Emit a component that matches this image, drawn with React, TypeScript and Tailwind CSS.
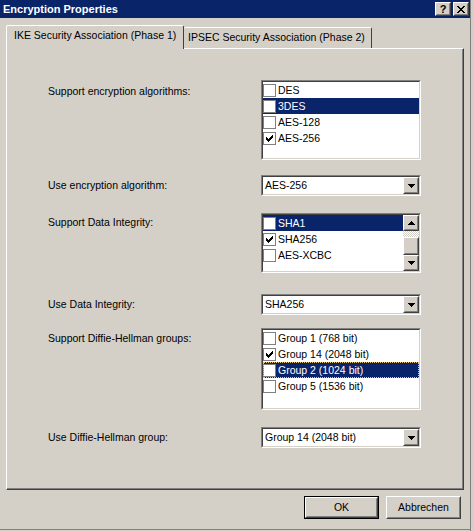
import type { ReactNode } from "react";

type Item = { label: string; checked?: boolean; selected?: boolean; focused?: boolean };

function Raised({ className, inner, children }: { className: string; inner?: string; children?: ReactNode }) {
  return (
    <div className={`bg-[#d4d0c8] border border-t-white border-l-white border-r-[#404040] border-b-[#404040] ${className}`}>
      <div className={`h-full border border-t-[#d4d0c8] border-l-[#d4d0c8] border-r-[#808080] border-b-[#808080] ${inner ?? ""}`}>
        {children}
      </div>
    </div>
  );
}

function Sunken({ className, inner, children }: { className: string; inner?: string; children?: ReactNode }) {
  return (
    <div className={`border border-t-[#808080] border-l-[#808080] border-r-white border-b-white ${className}`}>
      <div className={`h-full border border-t-[#404040] border-l-[#404040] border-r-[#d4d0c8] border-b-[#d4d0c8] ${inner ?? ""}`}>
        {children}
      </div>
    </div>
  );
}

function Arrow({ up }: { up?: boolean }) {
  return (
    <svg width="7" height="4" viewBox="0 0 7 4" shapeRendering="crispEdges">
      <path
        d={up ? "M3 0h1v1H3zM2 1h3v1H2zM1 2h5v1H1zM0 3h7v1H0z" : "M0 0h7v1H0zM1 1h5v1H1zM2 2h3v1H2zM3 3h1v1H3z"}
        fill="#000"
      />
    </svg>
  );
}

function CheckBox({ checked }: { checked?: boolean }) {
  return (
    <div className="w-[13px] h-[13px] shrink-0 bg-white border border-[#808080] flex items-center justify-center">
      {checked && (
        <svg width="7" height="7" viewBox="0 0 7 7" shapeRendering="crispEdges">
          <path d="M6 0h1v3H6zM5 1h1v3H5zM4 2h1v3H4zM3 3h1v3H3zM2 4h1v3H2zM1 3h1v3H1zM0 2h1v3H0z" fill="#000" />
        </svg>
      )}
    </div>
  );
}

function ScrollBar() {
  return (
    <div className="w-[16px] h-full flex flex-col">
      <Raised className="h-[16px]" inner="flex items-center justify-center">
        <Arrow up />
      </Raised>
      <div className="h-[6px] bg-[conic-gradient(#fff_25%,#d4d0c8_0_50%,#fff_0_75%,#d4d0c8_0)] bg-size-[2px_2px]" />
      <Raised className="h-[18px]" />
      <div className="flex-1 bg-[conic-gradient(#fff_25%,#d4d0c8_0_50%,#fff_0_75%,#d4d0c8_0)] bg-size-[2px_2px]" />
      <Raised className="h-[16px]" inner="flex items-center justify-center">
        <Arrow />
      </Raised>
    </div>
  );
}

function CheckList({ items, className, scroll }: { items: Item[]; className: string; scroll?: boolean }) {
  return (
    <Sunken className={`w-[160px] ${className}`} inner="bg-white flex">
      <div className="flex-1 flex flex-col">
        {items.map((it) => (
          <div
            key={it.label}
            className={`h-[16px] flex items-center ${it.selected ? "bg-[#0a246a] text-white" : "text-black"} ${
              it.focused ? "outline-1 outline-dotted outline-[#e8c878] -outline-offset-1" : ""
            }`}
          >
            <CheckBox checked={it.checked} />
            <span className="ml-[2px] whitespace-nowrap">{it.label}</span>
          </div>
        ))}
      </div>
      {scroll && <ScrollBar />}
    </Sunken>
  );
}

function Combo({ value }: { value: string }) {
  return (
    <Sunken className="w-[160px] h-[21px]" inner="bg-white flex items-center">
      <span className="flex-1 pl-[2px] whitespace-nowrap">{value}</span>
      <Raised className="w-[16px] h-[17px]" inner="flex items-center justify-center">
        <Arrow />
      </Raised>
    </Sunken>
  );
}

export default function App() {
  return (
    <div className="w-[474px] h-[531px] bg-[#d4d0c8] flex text-[10.5px] leading-[13px] text-black font-[family-name:Liberation_Sans,Arial,sans-serif] overflow-hidden">
      <div className="w-[470px] h-[530px] border-b border-[#808080] flex flex-col">
        {/* title bar */}
        <div className="h-[18px] bg-[#0a246a] flex items-center justify-between pl-[3px] pr-[1px]">
          <span className="text-white font-bold text-[11px]">Encryption Properties</span>
          <div className="flex gap-[2px]">
            <Raised className="w-[16px] h-[14px]" inner="flex items-center justify-center">
              <span className="font-bold text-[11px] leading-[10px]">?</span>
            </Raised>
            <Raised className="w-[16px] h-[14px]" inner="flex items-center justify-center">
              <svg width="8" height="7" viewBox="0 0 8 7" shapeRendering="crispEdges">
                <path d="M0 0h2v1H0zM6 0h2v1H6zM1 1h2v1H1zM5 1h2v1H5zM2 2h4v1H2zM3 3h2v1H3zM2 4h4v1H2zM1 5h2v1H1zM5 5h2v1H5zM0 6h2v1H0zM6 6h2v1H6z" fill="#000" />
              </svg>
            </Raised>
          </div>
        </div>

        {/* tabs */}
        <div className="mt-[7px] ml-[6px] h-[23px] flex items-start">
          <div className="relative z-10 w-[178px] h-[24px] bg-[#d4d0c8] border-t border-l border-r border-t-white border-l-white border-r-[#404040] rounded-t-[2px] pl-[7px] pt-[3px] whitespace-nowrap">
            IKE Security Association (Phase 1)
          </div>
          <div className="mt-[2px] w-[188px] h-[21px] border-t border-r border-t-white border-r-[#404040] rounded-t-[2px] pl-[4px] pt-[3px] whitespace-nowrap">
            IPSEC Security Association (Phase 2)
          </div>
        </div>

        {/* panel */}
        <div className="ml-[6px] w-[458px] h-[442px] border border-t-white border-l-white border-r-[#404040] border-b-[#404040]">
          <div className="h-full border-r border-b border-r-[#808080] border-b-[#808080] pl-[41px] pt-[31px] flex flex-col">
            <div className="flex">
              <div className="w-[213px] pt-[5px]">Support encryption algorithms:</div>
              <CheckList
                className="h-[80px]"
                items={[
                  { label: "DES" },
                  { label: "3DES", selected: true },
                  { label: "AES-128" },
                  { label: "AES-256", checked: true },
                ]}
              />
            </div>
            <div className="mt-[15px] flex items-center">
              <div className="w-[213px]">Use encryption algorithm:</div>
              <Combo value="AES-256" />
            </div>
            <div className="mt-[17px] flex">
              <div className="w-[213px] pt-[3px]">Support Data Integrity:</div>
              <CheckList
                className="h-[60px]"
                scroll
                items={[{ label: "SHA1", selected: true }, { label: "SHA256", checked: true }, { label: "AES-XCBC" }]}
              />
            </div>
            <div className="mt-[21px] flex items-center">
              <div className="w-[213px]">Use Data Integrity:</div>
              <Combo value="SHA256" />
            </div>
            <div className="mt-[13px] flex">
              <div className="w-[213px] pt-[4px]">Support Diffie-Hellman groups:</div>
              <CheckList
                className="h-[82px]"
                items={[
                  { label: "Group 1 (768 bit)" },
                  { label: "Group 14 (2048 bit)", checked: true },
                  { label: "Group 2 (1024 bit)", selected: true, focused: true },
                  { label: "Group 5 (1536 bit)" },
                ]}
              />
            </div>
            <div className="mt-[17px] flex items-center">
              <div className="w-[213px]">Use Diffie-Hellman group:</div>
              <Combo value="Group 14 (2048 bit)" />
            </div>
          </div>
        </div>

        {/* buttons */}
        <div className="mt-[6px] pr-[9px] flex justify-end gap-[7px]">
          <div className="w-[75px] h-[23px] border border-black">
            <Raised className="h-full" inner="flex items-center justify-center">
              OK
            </Raised>
          </div>
          <Raised className="w-[75px] h-[23px]" inner="flex items-center justify-center">
            Abbrechen
          </Raised>
        </div>
      </div>
      <div className="w-[4px] h-full border-l border-[#808080]" />
    </div>
  );
}
